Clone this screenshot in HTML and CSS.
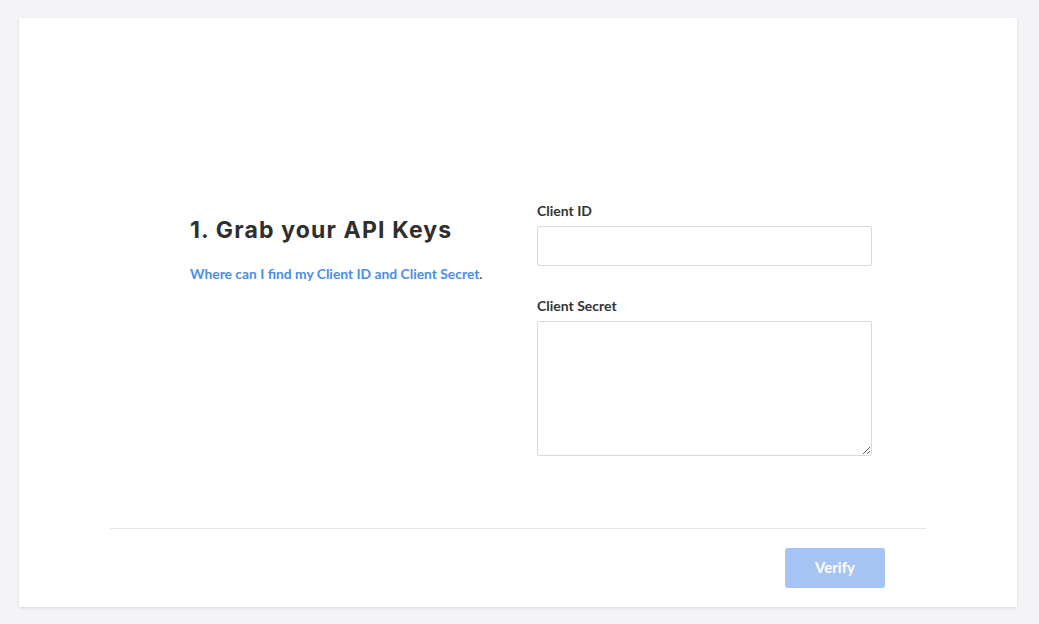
FILE: index.html
```html
<!DOCTYPE html>
<html>
<head>
<meta charset="utf-8">
<link rel="stylesheet" href="styles.css">
</head>
<body>
<div class="card">
  <div class="content">
    <div class="intro">
      <h1 class="title">1. Grab your API Keys</h1>
      <p class="help"><a class="help-link" href="#">Where can I find my Client ID and Client Secret</a>.</p>
    </div>
    <form class="fields">
      <label class="field">
        <span class="label">Client ID</span>
        <input class="input" type="text">
      </label>
      <label class="field">
        <span class="label">Client Secret</span>
        <textarea class="textarea"></textarea>
      </label>
    </form>
  </div>
  <div class="footer">
    <button class="verify" type="button">Verify</button>
  </div>
</div>
</body>
</html>
```

FILE: styles.css
```css
html, body {
  margin: 0;
  padding: 0;
}
body {
  background: #f3f3f8;
  font-family: "Lato", "Liberation Sans", sans-serif;
  color: #333;
  padding: 18px 22px 0 19px;
  height: 624px;
  box-sizing: border-box;
}
.card {
  background: #fff;
  height: 589px;
  box-shadow: 0 1px 3px rgba(0, 0, 0, 0.12);
  display: flex;
  flex-direction: column;
  padding: 0 91px;
  box-sizing: border-box;
}
.content {
  flex: 1;
  display: flex;
  padding: 183px 0 0 80px;
}
.intro {
  width: 347px;
  padding-top: 15px;
}
.title {
  margin: 0;
  font-family: "Inter", "Open Sans", sans-serif;
  font-weight: 700;
  font-size: 23px;
  line-height: 28px;
  color: #2f2f2f;
  letter-spacing: 1.15px;
}
.help {
  margin: 21px 0 0;
  font-size: 13.85px;
  line-height: 18px;
  color: #333;
}
.help-link {
  color: #4a8ee6;
  font-weight: 700;
  text-decoration: none;
}
.fields {
  width: 335px;
  display: flex;
  flex-direction: column;
  gap: 30px;
  margin: 0;
}
.field {
  display: flex;
  flex-direction: column;
}
.label {
  font-size: 14px;
  font-weight: 700;
  line-height: 20px;
  color: #333;
  margin-bottom: 5px;
}
.input, .textarea {
  box-sizing: border-box;
  border: 1px solid #d8d8e0;
  border-radius: 2px;
  width: 335px;
  font-family: inherit;
  font-size: 14px;
  padding: 8px 10px;
  margin: 0;
  background: #fff;
}
.input {
  height: 40px;
}
.textarea {
  height: 135px;
  resize: both;
  display: block;
}
.footer {
  border-top: 1px solid #e6e6ea;
  height: 79px;
  box-sizing: border-box;
  display: flex;
  justify-content: flex-end;
  align-items: flex-start;
  padding: 19px 41px 0 0;
}
.verify {
  width: 100px;
  height: 40px;
  border: none;
  border-radius: 3px;
  background: #a5c4f3;
  color: #fff;
  font-family: "Lato", sans-serif;
  font-weight: 700;
  font-size: 15px;
  line-height: 38px;
  padding: 0 0 2px;
}
```
